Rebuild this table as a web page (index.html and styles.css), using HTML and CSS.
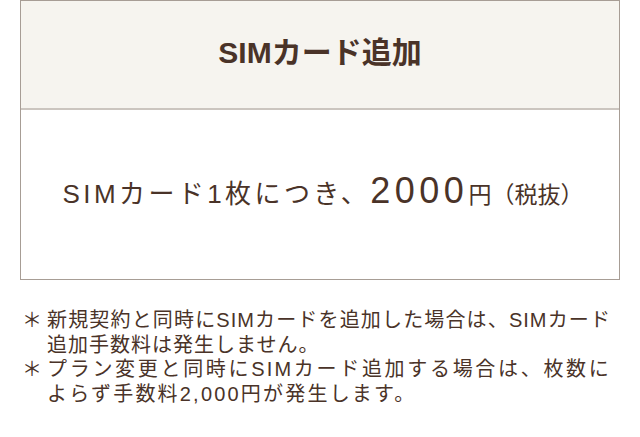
FILE: index.html
```html
<!DOCTYPE html>
<html lang="ja">
<head>
<meta charset="utf-8">
<link rel="stylesheet" href="styles.css">
</head>
<body>
<div class="page">
  <div class="table">
    <div class="head">SIMカード追加</div>
    <div class="cell">
      <p class="price">SIMカード1枚につき、<span class="num">2000</span><span class="yen">円</span><span class="tax">（税抜）</span></p>
    </div>
  </div>
  <ul class="notes">
    <li class="note note-a"><span class="mark">＊</span><span class="txt">新規契約と同時にSIMカードを追加した場合は、SIMカード追加手数料は発生しません。</span></li>
    <li class="note note-b"><span class="mark">＊</span><span class="txt">プラン変更と同時にSIMカード追加する場合は、枚数によらず手数料2,000円が発生します。</span></li>
  </ul>
</div>
</body>
</html>
```

FILE: styles.css
```css
html, body {
  margin: 0;
  padding: 0;
  background: #ffffff;
}
body {
  font-family: "Liberation Sans", "Noto Sans CJK JP", sans-serif;
  color: #4a3328;
}
.page {
  padding: 0 20px;
}
.table {
  width: 600px;
  box-sizing: border-box;
  border: 1px solid #a79d95;
}
.head {
  height: 109px;
  box-sizing: border-box;
  background: #f6f4ef;
  border-bottom: 2px solid #cbc5bf;
  display: flex;
  align-items: center;
  justify-content: center;
  font-size: 30px;
  font-weight: 700;
  line-height: 1;
  padding-bottom: 4px;
}
.cell {
  height: 169px;
  box-sizing: border-box;
  display: flex;
  align-items: center;
  justify-content: center;
  padding-bottom: 8px;
}
.price {
  margin: 0;
  font-size: 26px;
  letter-spacing: 3.4px;
  line-height: 1;
  display: flex;
  align-items: baseline;
  padding-left: 6px;
}
.num {
  font-size: 36px;
  letter-spacing: 4.5px;
}
.yen,
.tax {
  font-size: 23px;
  letter-spacing: 0;
}
.notes {
  list-style: none;
  margin: 28px 0 0 0;
  padding: 0 9px 0 2px;
  font-size: 20px;
  line-height: 24.5px;
}
.note {
  display: flex;
}
.note-a {
  letter-spacing: 1px;
}
.note-b {
  letter-spacing: 2.2px;
}
.mark {
  flex: 0 0 25px;
  letter-spacing: 0;
}
.txt {
  flex: 1;
  text-align: justify;
}
```
